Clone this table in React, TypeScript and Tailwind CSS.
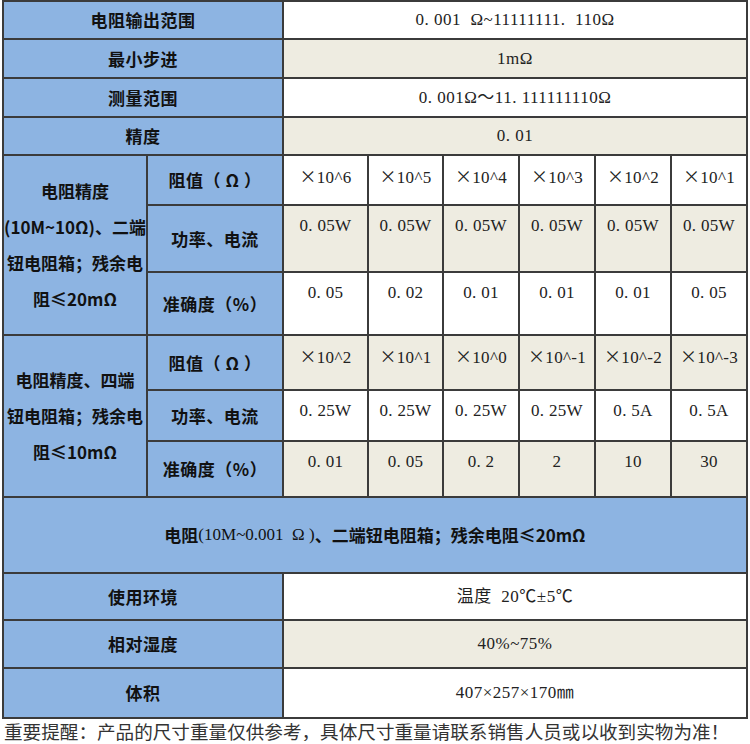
import type { ReactNode } from 'react';

const sans = "font-['Noto_Sans_CJK_SC',sans-serif]";
const serif = "font-['Liberation_Serif','Noto_Sans_CJK_SC',serif]";

function Label({ children, className = '' }: { children: ReactNode; className?: string }) {
    return (
        <div className={`flex items-center justify-center bg-[#8db4e2] text-[17px] font-bold tracking-[0.5px] text-[#111] ${sans} ${className}`}>
            {children}
        </div>
    );
}

function Value({ children, tan, className = '' }: { children: ReactNode; tan?: boolean; className?: string }) {
    return (
        <div className={`flex items-center justify-center text-[17px] tracking-[0.5px] text-[#222] ${serif} ${tan ? 'bg-[#eeece1]' : 'bg-white'} ${className}`}>
            {children}
        </div>
    );
}

function Data({ children, tan }: { children: ReactNode; tan?: boolean }) {
    return (
        <div className={`flex justify-center pt-[10px] text-[17px] leading-[20px] tracking-[0.3px] text-[#222] ${serif} ${tan ? 'bg-[#eeece1]' : 'bg-white'}`}>
            {children}
        </div>
    );
}

// ×10^n with a full-width times sign
function Pow({ n }: { n: string }) {
    return (
        <span>
            <span className={sans}>×</span>10^{n}
        </span>
    );
}

const group1 = {
    powers: ['6', '5', '4', '3', '2', '1'],
    power: ['0. 05W', '0. 05W', '0. 05W', '0. 05W', '0. 05W', '0. 05W'],
    accuracy: ['0. 05', '0. 02', '0. 01', '0. 01', '0. 01', '0. 05'],
};

const group2 = {
    powers: ['2', '1', '0', '-1', '-2', '-3'],
    power: ['0. 25W', '0. 25W', '0. 25W', '0. 25W', '0. 5A', '0. 5A'],
    accuracy: ['0. 01', '0. 05', '0. 2', '2', '10', '30'],
};

export default function App() {
    return (
        <div className="w-[750px] bg-white">
            <div className="ml-[2px] grid w-[746px] grid-cols-[142px_134px_83px_73px_74px_74px_74px_74px] grid-rows-[36px_37px_37px_36px_48px_65px_61px_53px_49px_54px_74px_45px_46px_48px] gap-[2px] bg-[#3b3b3b] p-[2px]">
                {/* simple rows */}
                <Label className="col-span-2">电阻输出范围</Label>
                <Value className="col-span-6">0. 001&nbsp;&nbsp;Ω~11111111.&nbsp;&nbsp;110Ω</Value>
                <Label className="col-span-2">最小步进</Label>
                <Value tan className="col-span-6">1mΩ</Value>
                <Label className="col-span-2">测量范围</Label>
                <Value className="col-span-6">0. 001Ω～11. 111111110Ω</Value>
                <Label className="col-span-2">精度</Label>
                <Value tan className="col-span-6">0. 01</Value>

                {/* two-terminal group */}
                <Label className="row-span-3 flex-col leading-[36px] tracking-normal">
                    <span>电阻精度</span>
                    <span className="whitespace-nowrap">(10M~10Ω)、二端</span>
                    <span className="whitespace-nowrap">钮电阻箱；残余电</span>
                    <span>阻≤20mΩ</span>
                </Label>
                <Label>阻值（ Ω ）</Label>
                {group1.powers.map((p, i) => (
                    <Data key={`a${i}`}>
                        <Pow n={p} />
                    </Data>
                ))}
                <Label>功率、电流</Label>
                {group1.power.map((v, i) => (
                    <Data key={`b${i}`} tan>
                        {v}
                    </Data>
                ))}
                <Label>准确度（%）</Label>
                {group1.accuracy.map((v, i) => (
                    <Data key={`c${i}`}>{v}</Data>
                ))}

                {/* four-terminal group */}
                <Label className="row-span-3 flex-col leading-[36px] tracking-normal">
                    <span className="whitespace-nowrap">电阻精度、四端</span>
                    <span className="whitespace-nowrap">钮电阻箱；残余电</span>
                    <span>阻≤10mΩ</span>
                </Label>
                <Label>阻值（ Ω ）</Label>
                {group2.powers.map((p, i) => (
                    <Data key={`d${i}`} tan>
                        <Pow n={p} />
                    </Data>
                ))}
                <Label>功率、电流</Label>
                {group2.power.map((v, i) => (
                    <Data key={`e${i}`}>{v}</Data>
                ))}
                <Label>准确度（%）</Label>
                {group2.accuracy.map((v, i) => (
                    <Data key={`f${i}`} tan>
                        {v}
                    </Data>
                ))}

                {/* full-width note row */}
                <Label className="col-span-8 tracking-normal">
                    电阻<span className={`font-normal ${serif}`}>(10M~0.001&nbsp;&nbsp;Ω&nbsp;)</span>、二端钮电阻箱；残余电阻≤20mΩ
                </Label>

                <Label className="col-span-2">使用环境</Label>
                <Value className="col-span-6">温度&nbsp;&nbsp;20℃±5℃</Value>
                <Label className="col-span-2">相对湿度</Label>
                <Value tan className="col-span-6">40%~75%</Value>
                <Label className="col-span-2">体积</Label>
                <Value className="col-span-6">407×257×170㎜</Value>
            </div>

            <p className={`mt-[2px] pl-[4px] text-[18.6px] leading-[20px] whitespace-nowrap text-[#333] ${sans}`}>
                重要提醒：产品的尺寸重量仅供参考，具体尺寸重量请联系销售人员或以收到实物为准！
            </p>
        </div>
    );
}
